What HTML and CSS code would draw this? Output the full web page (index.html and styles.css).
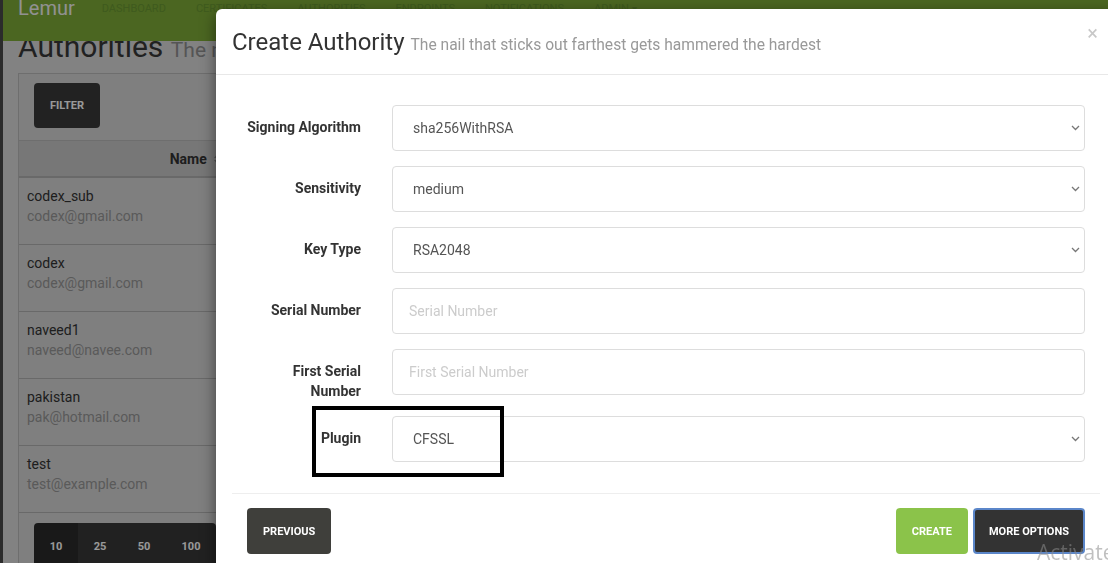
FILE: index.html
```html
<!DOCTYPE html>
<html lang="en">
<head>
    <meta charset="UTF-8">
    <meta name="viewport" content="width=device-width, initial-scale=1.0">
    <title>Lemur - Authorities</title>
    <link rel="stylesheet" href="styles.css">
</head>
<body>
    <div class="page">
        <nav class="navbar">
            <div class="navbar-inner">
                <span class="brand">Lemur</span>
                <ul class="nav-links">
                    <li>Dashboard</li>
                    <li>Certificates</li>
                    <li>Authorities</li>
                    <li>Endpoints</li>
                    <li>Notifications</li>
                    <li>Admin <span class="caret">&#9662;</span></li>
                </ul>
            </div>
        </nav>

        <main class="content">
            <h1 class="page-title">Authorities <small>The nail that sticks out farthest gets hammered the hardest</small></h1>
            <div class="panel">
                <div class="toolbar">
                    <button class="btn btn-dark">Filter</button>
                </div>
                <table class="table">
                    <thead>
                        <tr>
                            <th class="col-name">Name
                                <svg class="sort" width="8" height="12" viewBox="0 0 8 12"><path d="M4 0 8 5H0zM4 12 0 7h8z" fill="#8a8a8a"/></svg>
                            </th>
                            <th>Owner</th>
                            <th>Active</th>
                        </tr>
                    </thead>
                    <tbody>
                        <tr><td>codex_sub<span class="muted">codex@gmail.com</span></td><td></td><td></td></tr>
                        <tr><td>codex<span class="muted">codex@gmail.com</span></td><td></td><td></td></tr>
                        <tr><td>naveed1<span class="muted">naveed@navee.com</span></td><td></td><td></td></tr>
                        <tr><td>pakistan<span class="muted">pak@hotmail.com</span></td><td></td><td></td></tr>
                        <tr><td>test<span class="muted">test@example.com</span></td><td></td><td></td></tr>
                    </tbody>
                </table>
                <div class="pager">
                    <button class="pg active">10</button>
                    <button class="pg">25</button>
                    <button class="pg">50</button>
                    <button class="pg pg-wide">100</button>
                </div>
            </div>
        </main>
    </div>

    <div class="backdrop"></div>

    <!-- Create authority modal -->
    <div class="modal">
        <div class="modal-header">
            <h3 class="modal-title">Create Authority <small>The nail that sticks out farthest gets hammered the hardest</small></h3>
            <span class="close">&times;</span>
        </div>
        <form class="modal-form">
            <div class="modal-body">
                <div class="form-row">
                    <label class="form-label">Signing Algorithm</label>
                    <div class="select-wrap">
                        <select class="form-control"><option>sha256WithRSA</option></select>
                        <svg width="9" height="6" viewBox="0 0 9 6"><path d="M1 1l3.5 3.5L8 1" fill="none" stroke="#777" stroke-width="1.3"/></svg>
                    </div>
                </div>
                <div class="form-row">
                    <label class="form-label">Sensitivity</label>
                    <div class="select-wrap">
                        <select class="form-control"><option>medium</option></select>
                        <svg width="9" height="6" viewBox="0 0 9 6"><path d="M1 1l3.5 3.5L8 1" fill="none" stroke="#777" stroke-width="1.3"/></svg>
                    </div>
                </div>
                <div class="form-row">
                    <label class="form-label">Key Type</label>
                    <div class="select-wrap">
                        <select class="form-control"><option>RSA2048</option></select>
                        <svg width="9" height="6" viewBox="0 0 9 6"><path d="M1 1l3.5 3.5L8 1" fill="none" stroke="#777" stroke-width="1.3"/></svg>
                    </div>
                </div>
                <div class="form-row">
                    <label class="form-label">Serial Number</label>
                    <input class="form-control" type="text" placeholder="Serial Number">
                </div>
                <div class="form-row">
                    <label class="form-label">First Serial Number</label>
                    <input class="form-control" type="text" placeholder="First Serial Number">
                </div>
                <div class="form-row plugin-row">
                    <label class="form-label">Plugin</label>
                    <div class="select-wrap">
                        <select class="form-control"><option>CFSSL</option></select>
                        <svg width="9" height="6" viewBox="0 0 9 6"><path d="M1 1l3.5 3.5L8 1" fill="none" stroke="#777" stroke-width="1.3"/></svg>
                    </div>
                    <div class="callout"></div>
                </div>
            </div>
            <div class="modal-footer">
                <button type="button" class="btn btn-prev">Previous</button>
                <button type="button" class="btn btn-create">Create</button>
                <button type="button" class="btn btn-more">More Options</button>
            </div>
        </form>
    </div>

    <div class="watermark">Activate Windows</div>
</body>
</html>
```

FILE: styles.css
```css
/* Basic reset */
* {
    box-sizing: border-box;
}

body {
    margin: 0;
    height: 563px;
    overflow: hidden;
    font-family: Roboto, "Liberation Sans", sans-serif;
    background: #d9d9d9;
}

button {
    font-family: inherit;
    cursor: pointer;
}

/* Background page */
.page {
    min-height: 563px;
    border-left: 3px solid #484848;
    background: #d9d9d9;
}

.navbar {
    position: fixed;
    top: 0;
    left: 3px;
    right: 0;
    height: 41px;
    overflow: hidden;
    background: #7daa37;
    z-index: 5;
}

.navbar-inner {
    display: flex;
    align-items: flex-start;
    margin-top: -2px;
    padding-left: 15px;
}

.brand {
    font-size: 20px;
    line-height: 20px;
    color: #f2f2f2;
    padding-right: 12px;
}

.nav-links {
    display: flex;
    list-style: none;
    margin: 0;
    padding: 0;
}

.nav-links li {
    padding: 1px 15px 0;
    font-size: 11px;
    line-height: 20px;
    text-transform: uppercase;
    color: #699632;
}

.caret {
    font-size: 10px;
}

.content {
    padding: 28px 0 0 15px;
}

.page-title {
    height: 36px;
    margin: 0;
    font-size: 30px;
    font-weight: 400;
    line-height: 38px;
    color: #383838;
    white-space: nowrap;
}

.page-title small {
    font-size: 21px;
    line-height: 1;
    color: #8e8e8e;
}

.panel {
    margin-top: 9px;
    border: 1px solid #b8b8b8;
    background: #d4d4d4;
}

.toolbar {
    padding: 9px 15px 12px;
}

.btn {
    height: 46px;
    padding: 0 16px;
    border: none;
    border-radius: 4px;
    font-size: 11px;
    font-weight: 700;
    text-transform: uppercase;
    color: #fff;
}

.btn-dark {
    width: 66px;
    height: 45px;
    background: #3a3a3a;
}

.table {
    width: 100%;
    border-collapse: collapse;
}

.table th {
    padding: 8px 8px 7px;
    font-size: 14px;
    line-height: 20px;
    font-weight: 700;
    color: #333;
    text-align: left;
    background: #c6c6c6;
    border-top: 1px solid #b8b8b8;
    border-bottom: 2px solid #b0b0b0;
}

.table th.col-name {
    width: 354px;
    text-align: center;
}

.sort {
    margin-left: 4px;
    vertical-align: -1px;
}

.table td {
    padding: 8px 8px 18px;
    font-size: 14px;
    line-height: 20px;
    color: #333;
    vertical-align: top;
    border-bottom: 1px solid #b0b0b0;
}

.muted {
    display: block;
    color: #969696;
}

.pager {
    display: flex;
    padding: 10px 15px;
}

.pg {
    width: 44px;
    height: 46px;
    border: none;
    font-size: 11px;
    font-weight: 700;
    color: #fff;
    background: #383838;
}

.pg:first-child {
    border-radius: 4px 0 0 4px;
}

.pg.active {
    background: #2b2b2b;
}

.pg-wide {
    width: 50px;
    border-radius: 0 4px 4px 0;
}

.backdrop {
    position: fixed;
    inset: 0;
    background: rgba(0, 0, 0, 0.4);
    z-index: 10;
}

/* Modal */
.modal {
    position: fixed;
    top: 9px;
    left: 216px;
    width: 900px;
    background: #fff;
    border-radius: 6px;
    box-shadow: 0 5px 15px rgba(0, 0, 0, 0.5);
    z-index: 20;
}

.modal-header {
    display: flex;
    align-items: flex-start;
    height: 66px;
    padding: 18px 18px 0 16px;
    border-bottom: 1px solid #e8e8e8;
}

.modal-title {
    margin: 0;
    font-size: 24px;
    font-weight: 400;
    line-height: 30px;
    color: #333;
    white-space: nowrap;
}

.modal-title small {
    font-size: 15.6px;
    color: #999;
}

.close {
    margin-left: auto;
    margin-top: -4px;
    font-size: 20px;
    line-height: 20px;
    color: #c8c8c8;
}

.modal-body {
    padding: 30px 31px 31px 16px;
}

.form-row {
    display: grid;
    grid-template-columns: 129px 1fr;
    column-gap: 31px;
    margin-bottom: 15px;
}

.form-row:last-child {
    margin-bottom: 0;
}

.form-label {
    padding: 12px 0 0 12px;
    font-size: 14px;
    font-weight: 700;
    line-height: 20px;
    text-align: right;
    color: #333;
}

.form-control {
    width: 100%;
    height: 46px;
    padding: 0 16px;
    border: 1px solid #ddd;
    border-radius: 4px;
    font-family: inherit;
    font-size: 14px;
    color: #555;
    background: #fff;
}

.form-control::placeholder {
    color: #ccc;
}

select.form-control {
    appearance: none;
    padding-left: 20px;
}

.select-wrap {
    position: relative;
}

.select-wrap svg {
    position: absolute;
    right: 5px;
    top: 20px;
    pointer-events: none;
}

.plugin-row {
    position: relative;
}

.callout {
    position: absolute;
    left: 80px;
    top: -10px;
    width: 192px;
    height: 71px;
    border: 4px solid #000;
}

.modal-footer {
    display: flex;
    margin: 0 16px;
    padding: 14px 15px 15px;
    border-top: 1px solid #eee;
}

.btn-prev {
    background: #3f3f3b;
}

.btn-create {
    margin-left: auto;
    background: #8bc34a;
}

.btn-more {
    margin-left: 5px;
    padding: 0 14px;
    background: #333;
    border: 2px solid #5b86c9;
}

.watermark {
    position: fixed;
    left: 1037px;
    top: 538px;
    font-family: "Open Sans", sans-serif;
    font-size: 21px;
    white-space: nowrap;
    color: rgba(140, 140, 140, 0.55);
    z-index: 30;
}
```
